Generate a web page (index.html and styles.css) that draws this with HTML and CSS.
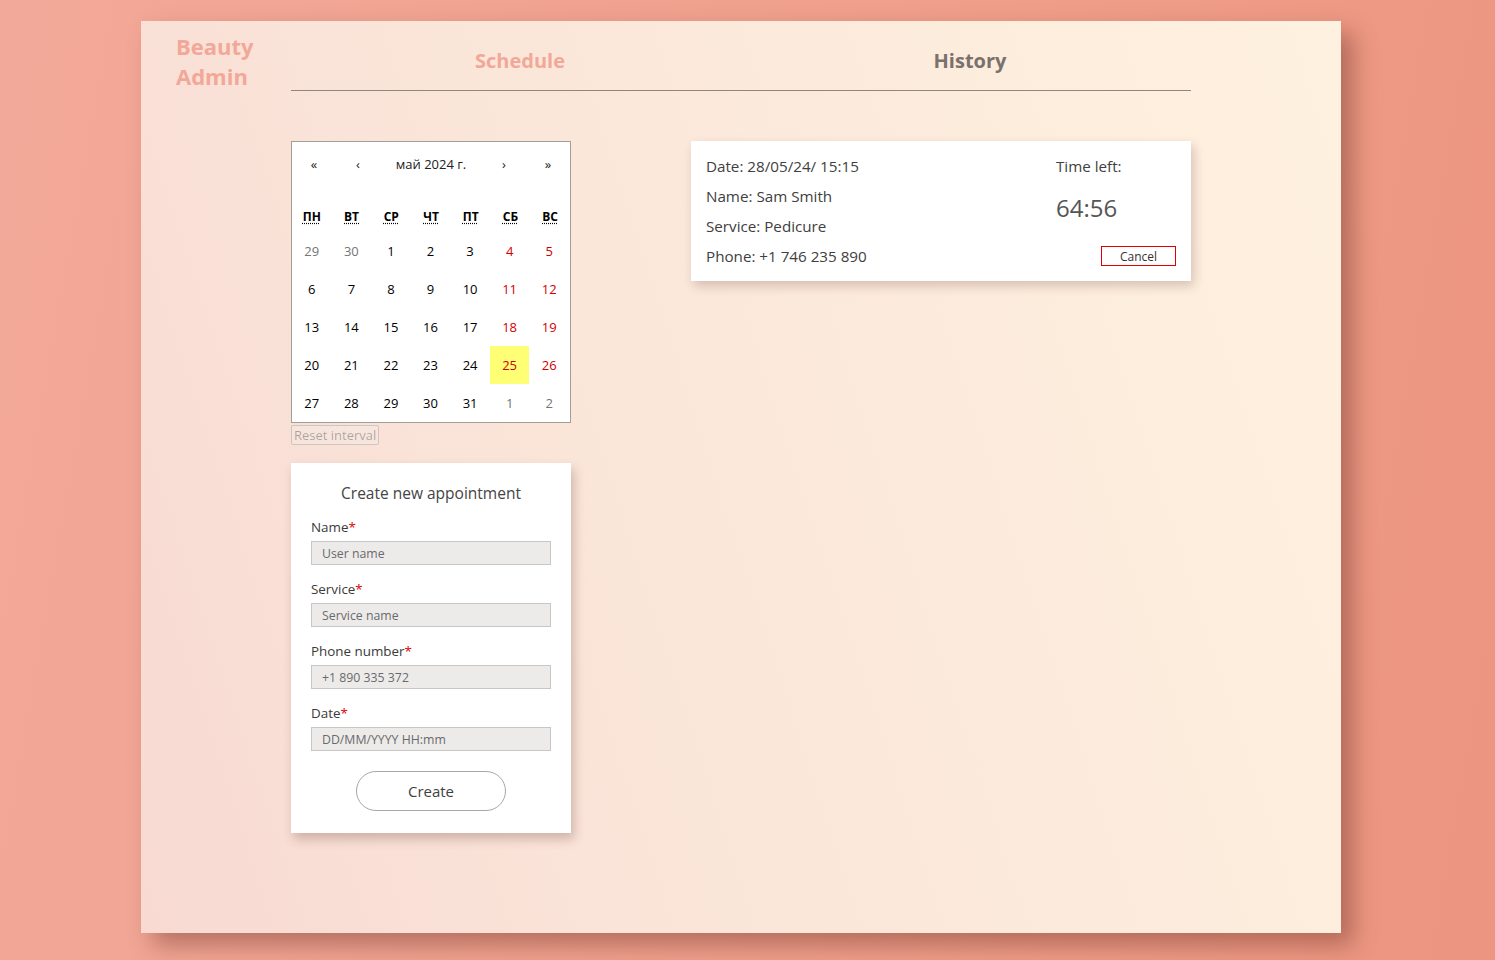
FILE: index.html
```html
<!DOCTYPE html>
<html lang="en">
<head>
<meta charset="utf-8">
<title>Beauty Admin</title>
<link rel="stylesheet" href="styles.css">
</head>
<body>
<div class="app">
  <header class="header">
    <div class="logo">Beauty<br>Admin</div>
    <nav class="nav">
      <a class="nav-item active">Schedule</a>
      <a class="nav-item">History</a>
    </nav>
  </header>
  <main class="content">
    <div class="left-col">
      <div class="calendar">
        <div class="cal-nav">
          <button class="cal-btn">«</button>
          <button class="cal-btn">‹</button>
          <button class="cal-label">май 2024 г.</button>
          <button class="cal-btn">›</button>
          <button class="cal-btn">»</button>
        </div>
        <div class="cal-weekdays">
          <div><abbr title="понедельник">пн</abbr></div>
          <div><abbr title="вторник">вт</abbr></div>
          <div><abbr title="среда">ср</abbr></div>
          <div><abbr title="четверг">чт</abbr></div>
          <div><abbr title="пятница">пт</abbr></div>
          <div><abbr title="суббота">сб</abbr></div>
          <div><abbr title="воскресенье">вс</abbr></div>
        </div>
        <div class="cal-days">
          <div class="day other">29</div><div class="day other">30</div><div class="day">1</div><div class="day">2</div><div class="day">3</div><div class="day weekend">4</div><div class="day weekend">5</div>
          <div class="day">6</div><div class="day">7</div><div class="day">8</div><div class="day">9</div><div class="day">10</div><div class="day weekend">11</div><div class="day weekend">12</div>
          <div class="day">13</div><div class="day">14</div><div class="day">15</div><div class="day">16</div><div class="day">17</div><div class="day weekend">18</div><div class="day weekend">19</div>
          <div class="day">20</div><div class="day">21</div><div class="day">22</div><div class="day">23</div><div class="day">24</div><div class="day weekend now">25</div><div class="day weekend">26</div>
          <div class="day">27</div><div class="day">28</div><div class="day">29</div><div class="day">30</div><div class="day">31</div><div class="day other">1</div><div class="day other">2</div>
        </div>
      </div>
      <button class="reset" disabled>Reset interval</button>
      <form class="form-card">
        <div class="form-title">Create new appointment</div>
        <label class="field-label">Name<span class="req">*</span></label>
        <input class="field" type="text" placeholder="User name">
        <label class="field-label">Service<span class="req">*</span></label>
        <input class="field" type="text" placeholder="Service name">
        <label class="field-label">Phone number<span class="req">*</span></label>
        <input class="field" type="text" placeholder="+1 890 335 372">
        <label class="field-label">Date<span class="req">*</span></label>
        <input class="field" type="text" placeholder="DD/MM/YYYY HH:mm">
        <button class="create" type="button">Create</button>
      </form>
    </div>
    <div class="right-col">
      <div class="appointment">
        <div class="appt-info">
          <div class="appt-line">Date: 28/05/24/ 15:15</div>
          <div class="appt-line">Name: Sam Smith</div>
          <div class="appt-line">Service: Pedicure</div>
          <div class="appt-line">Phone: +1 746 235 890</div>
        </div>
        <div class="appt-timer">
          <div class="timer-label">Time left:</div>
          <div class="timer-value">64:56</div>
          <button class="cancel">Cancel</button>
        </div>
      </div>
    </div>
  </main>
</div>
</body>
</html>
```

FILE: styles.css
```css
* { box-sizing: border-box; }

html, body {
  margin: 0;
  height: 960px;
  overflow: hidden;
}

body {
  font-family: "Open Sans", "Liberation Sans", sans-serif;
  background: linear-gradient(100deg, #f3a999 0%, #ef9e8a 60%, #ec9580 100%);
  padding: 21px 0 0 141px;
}

.app {
  width: 1200px;
  height: 912px;
  background: linear-gradient(72deg, #f8dad2 0%, #fae3d8 30%, #fcebdc 65%, #fff1df 100%);
  box-shadow: 12px 12px 22px rgba(110, 50, 40, 0.45);
  padding-top: 10px;
}

.header {
  display: grid;
  grid-template-columns: 150px 900px;
}

.logo {
  padding-left: 35px;
  font-size: 22px;
  line-height: 30px;
  font-weight: 700;
  color: #f2a898;
}

.nav {
  display: grid;
  grid-template-columns: 1fr 1fr;
  padding: 16px 0;
  border-bottom: 1px solid #8f8680;
}

.nav-item {
  text-align: center;
  padding-left: 8px;
  font-size: 20px;
  line-height: 27px;
  font-weight: 700;
  color: #7b716c;
}

.nav-item.active { color: #f2a898; }

.content {
  display: flex;
  gap: 120px;
  margin: 50px 0 0 150px;
  align-items: flex-start;
}

.left-col {
  width: 280px;
  display: flex;
  flex-direction: column;
  align-items: flex-start;
}

/* Calendar */
.calendar {
  width: 280px;
  background: #fff;
  border: 1px solid #a0a096;
}

.cal-nav {
  display: flex;
  height: 44px;
  margin-bottom: 12px;
}

.cal-nav button {
  border: none;
  background: none;
  font-family: inherit;
  font-size: 13px;
  color: #222;
  padding: 0;
}

.cal-btn { width: 44px; }
.cal-label { flex: 1; font-size: 13px; }

.cal-weekdays {
  display: grid;
  grid-template-columns: repeat(7, 1fr);
  height: 34px;
  padding-top: 2px;
  align-items: center;
  text-align: center;
  font-size: 12px;
  font-weight: 700;
  text-transform: uppercase;
  color: #000;
}

.cal-weekdays abbr {
  text-decoration: underline dotted;
  text-underline-offset: 2px;
}

.cal-days {
  display: grid;
  grid-template-columns: repeat(7, 1fr);
  grid-auto-rows: 38px;
  padding-right: 1px;
}

.day {
  display: flex;
  align-items: center;
  justify-content: center;
  font-size: 13px;
  color: #000;
}

.day.weekend { color: #d10000; }
.day.other { color: #757575; }
.day.now { background: #ffff76; }

.reset {
  margin-top: 2px;
  height: 20px;
  padding: 0 2px;
  font-family: inherit;
  font-size: 13px;
  line-height: 18px;
  color: rgba(16, 16, 16, 0.33);
  background: rgba(239, 239, 239, 0.3);
  border: 1px solid rgba(118, 118, 118, 0.3);
  border-radius: 2px;
}

/* Form */
.form-card {
  margin-top: 18px;
  width: 280px;
  background: #fff;
  box-shadow: 3px 6px 10px rgba(80, 40, 30, 0.25);
  padding: 20px 20px 22px;
  display: flex;
  flex-direction: column;
}

.form-title {
  text-align: center;
  font-size: 15.5px;
  line-height: 20px;
  color: #444;
  margin-bottom: 15px;
}

.field-label {
  font-size: 13.4px;
  line-height: 18px;
  color: #3a3a3a;
  margin-bottom: 5px;
}

.req { color: #e00000; }

.field {
  height: 24px;
  border: 1px solid #c9c7c6;
  background: #edebea;
  padding: 0 10px;
  font-family: inherit;
  font-size: 12.3px;
  color: #333;
  margin-bottom: 15px;
  outline: none;
}

.field::placeholder { color: #6a6a6a; }

.field:last-of-type { margin-bottom: 20px; }

.create {
  align-self: center;
  width: 150px;
  height: 40px;
  border: 1px solid #a9a6a4;
  border-radius: 20px;
  background: #fff;
  font-family: inherit;
  font-size: 15px;
  color: #3f3f3f;
}

/* Appointment */
.right-col { width: 500px; }

.appointment {
  background: #fff;
  box-shadow: 3px 5px 10px rgba(80, 40, 30, 0.22);
  padding: 15px;
  display: flex;
  justify-content: space-between;
}

.appt-info {
  display: flex;
  flex-direction: column;
  gap: 10px;
}

.appt-line {
  font-size: 15.2px;
  line-height: 20px;
  color: #404040;
}

.appt-timer {
  width: 120px;
  display: flex;
  flex-direction: column;
}

.timer-label {
  font-size: 15.2px;
  line-height: 20px;
  color: #404040;
}

.timer-value {
  font-size: 24px;
  line-height: 32px;
  margin-top: 16px;
  color: #555;
}

.cancel {
  align-self: flex-end;
  margin-top: auto;
  width: 75px;
  height: 20px;
  padding: 0;
  border: 1px solid #e00000;
  background: #fff;
  font-family: inherit;
  font-size: 12px;
  color: #333;
}
```
